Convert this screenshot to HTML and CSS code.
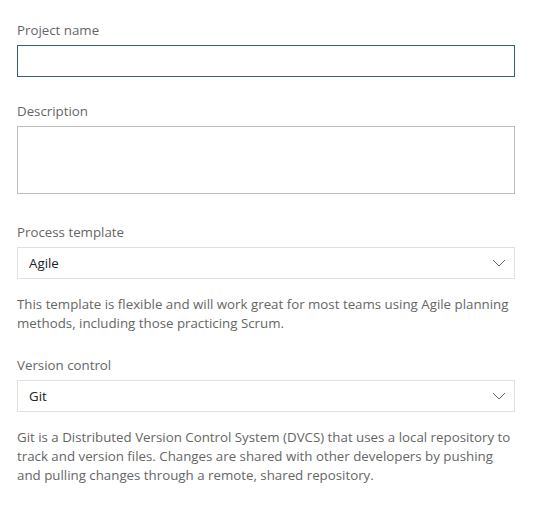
FILE: index.html
```html
<!DOCTYPE html>
<html>
<head>
<meta charset="utf-8">
<link rel="stylesheet" href="styles.css">
</head>
<body>
<form class="form">
  <div class="field">
    <label class="label">Project name</label>
    <div class="input focused"></div>
  </div>
  <div class="field field-desc">
    <label class="label">Description</label>
    <div class="textarea"></div>
  </div>
  <div class="field field-process">
    <label class="label">Process template</label>
    <div class="select">
      <span class="value">Agile</span>
      <svg class="chev" width="14" height="8" viewBox="0 0 14 8"><path d="M1 1 L7 7 L13 1" fill="none" stroke="#666" stroke-width="1"/></svg>
    </div>
    <p class="help">This template is flexible and will work great for most teams using Agile planning methods, including those practicing Scrum.</p>
  </div>
  <div class="field field-vc">
    <label class="label">Version control</label>
    <div class="select">
      <span class="value">Git</span>
      <svg class="chev" width="14" height="8" viewBox="0 0 14 8"><path d="M1 1 L7 7 L13 1" fill="none" stroke="#666" stroke-width="1"/></svg>
    </div>
    <p class="help">Git is a Distributed Version Control System (DVCS) that uses a local repository to track and version files. Changes are shared with other developers by pushing and pulling changes through a remote, shared repository.</p>
  </div>
</form>
</body>
</html>
```
FILE: styles.css
```css
html, body {
  margin: 0;
  padding: 0;
  background: #ffffff;
}
body {
  font-family: "Open Sans", "Noto Sans", sans-serif;
  font-size: 13.3px;
  color: #333;
}
.form {
  width: 498px;
  padding: 20px 0 0 17px;
  display: flex;
  flex-direction: column;
}
.field {
  display: flex;
  flex-direction: column;
}
.field-desc {
  margin-top: 24px;
}
.field-process {
  margin-top: 28px;
}
.field-vc {
  margin-top: 22px;
}
.label {
  display: block;
  line-height: 20px;
  color: #666;
  margin-bottom: 5px;
}
.input {
  box-sizing: border-box;
  height: 32px;
  border: 1px solid #c8c8c8;
}
.input.focused {
  border-color: #2e5f83;
}
.textarea {
  box-sizing: border-box;
  height: 68px;
  border: 1px solid #bdbdbd;
}
.select {
  box-sizing: border-box;
  height: 32px;
  border: 1px solid #e0e0e0;
  display: flex;
  align-items: center;
  justify-content: space-between;
  padding: 0 8px 0 11px;
}
.value {
  color: #222;
}
.chev {
  display: block;
}
.help {
  margin: 16px 0 0 0;
  line-height: 19px;
  color: #666;
}
```
